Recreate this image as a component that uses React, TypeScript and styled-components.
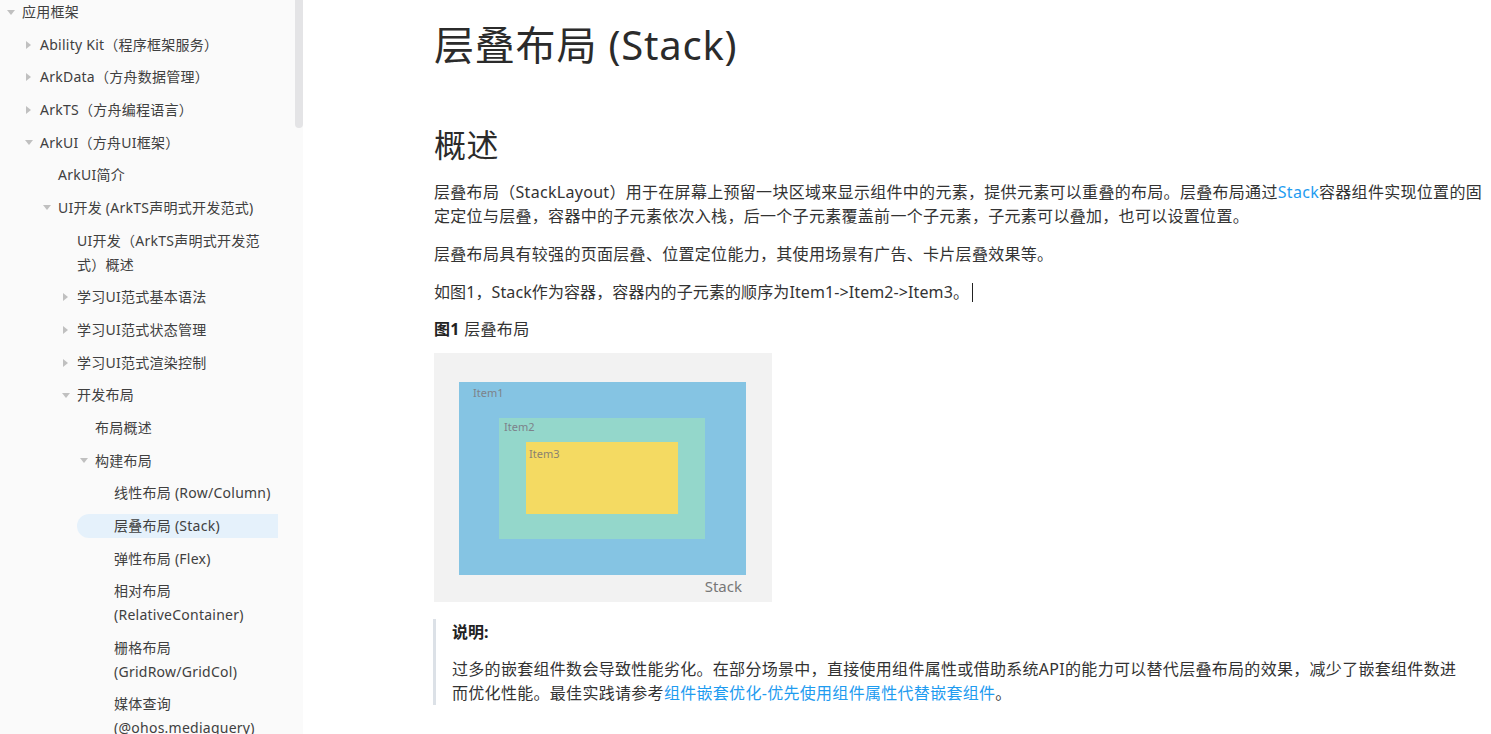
import React from "react";
import styled, { createGlobalStyle } from "styled-components";

const GlobalStyle = createGlobalStyle`
  html, body {
    margin: 0;
    padding: 0;
    background: #ffffff;
    overflow: hidden;
  }
  body {
    font-family: "Noto Sans", "Noto Sans CJK SC", sans-serif;
    color: #333333;
  }
`;

const Page = styled.div`
  display: flex;
  height: 734px;
  width: 1491px;
  overflow: hidden;
`;

const Sidebar = styled.aside`
  flex: none;
  width: 303px;
  height: 734px;
  background: #fafafa;
  display: flex;
  overflow: hidden;
`;

const Nav = styled.ul`
  list-style: none;
  margin: -4.33px 0 0 0;
  padding: 0;
  width: 295px;
  flex: none;
`;

const TEXT_X = [22, 40, 58, 77, 95, 114];

const Row = styled.li`
  padding: 4.33px 0;
`;

const Item = styled.div<{ $level: number; $active?: boolean }>`
  display: flex;
  align-items: flex-start;
  margin-left: ${(p) => TEXT_X[p.$level] - 37}px;
  margin-right: 17px;
  padding-left: 19px;
  border-radius: 12px 0 0 12px;
  background: ${(p) => (p.$active ? "#e5f1fb" : "transparent")};
`;

const CaretSlot = styled.span`
  flex: none;
  width: 18px;
  height: 24px;
  display: flex;
  align-items: center;
  padding-left: 4px;
  box-sizing: border-box;
`;

const Caret = styled.span<{ $open: boolean }>`
  width: 0;
  height: 0;
  ${(p) =>
    p.$open
      ? `border-left: 4px solid transparent;
         border-right: 4px solid transparent;
         border-top: 5px solid #c0c0c0;
         margin-left: -1px;`
      : `border-top: 4px solid transparent;
         border-bottom: 4px solid transparent;
         border-left: 5px solid #c0c0c0;`}
`;

const Label = styled.span`
  font-size: 14px;
  line-height: 24px;
  letter-spacing: 0.25px;
  color: #404040;
  white-space: nowrap;
`;

const ScrollTrack = styled.div`
  flex: none;
  width: 8px;
`;

const ScrollThumb = styled.div`
  width: 8px;
  height: 128px;
  background: #e4e4e6;
  border-radius: 0 0 4px 4px;
`;

const Main = styled.main`
  flex: 1;
  padding: 17px 0 0 131px;
  overflow: hidden;
`;

const Title = styled.h1`
  margin: 0;
  font-size: 40px;
  line-height: 56px;
  font-weight: 400;
  letter-spacing: 0.8px;
  color: #2b2b2b;
  white-space: nowrap;
`;

const SectionTitle = styled.h2`
  margin: 50px 0 0 0;
  font-size: 32px;
  line-height: 44px;
  font-weight: 400;
  letter-spacing: 0.4px;
  color: #2b2b2b;
`;

const Para = styled.p<{ $gap?: number; $spacing?: number }>`
  margin: ${(p) => p.$gap ?? 14}px 0 0 0;
  font-size: 16px;
  line-height: 24px;
  letter-spacing: ${(p) => p.$spacing ?? 0.3}px;
  color: #333333;
  white-space: nowrap;
`;

const Link = styled.a`
  color: #1f9cf0;
  text-decoration: none;
`;

const Cursor = styled.span`
  display: inline-block;
  width: 1px;
  height: 19px;
  background: #222;
  margin-left: 3px;
  vertical-align: -4px;
`;

const Caption = styled.p`
  margin: 13px 0 0 0;
  font-size: 16px;
  line-height: 24px;
  letter-spacing: 0.3px;
  color: #333333;
`;

const Strong = styled.strong`
  font-weight: 700;
  color: #222;
`;

const Figure = styled.div`
  margin-top: 12px;
  width: 338px;
  height: 249px;
  background: #f2f2f2;
`;

const Note = styled.div`
  margin: 17px 0 0 -1px;
  border-left: 3px solid #dce1e7;
  padding: 1px 0 0 16px;
  height: 85px;
`;

const NoteTitle = styled.div`
  font-size: 16px;
  line-height: 24px;
  font-weight: 700;
  color: #222;
`;

const NoteText = styled.p`
  margin: 13px 0 0 0;
  font-size: 16px;
  line-height: 24px;
  letter-spacing: 0.3px;
  color: #333333;
  white-space: nowrap;
`;

type NavEntry = {
  level: number;
  lines: string[];
  caret?: "open" | "closed";
  active?: boolean;
};

const NAV: NavEntry[] = [
  { level: 0, lines: ["应用框架"], caret: "open" },
  { level: 1, lines: ["Ability Kit（程序框架服务）"], caret: "closed" },
  { level: 1, lines: ["ArkData（方舟数据管理）"], caret: "closed" },
  { level: 1, lines: ["ArkTS（方舟编程语言）"], caret: "closed" },
  { level: 1, lines: ["ArkUI（方舟UI框架）"], caret: "open" },
  { level: 2, lines: ["ArkUI简介"] },
  { level: 2, lines: ["UI开发 (ArkTS声明式开发范式)"], caret: "open" },
  { level: 3, lines: ["UI开发（ArkTS声明式开发范", "式）概述"] },
  { level: 3, lines: ["学习UI范式基本语法"], caret: "closed" },
  { level: 3, lines: ["学习UI范式状态管理"], caret: "closed" },
  { level: 3, lines: ["学习UI范式渲染控制"], caret: "closed" },
  { level: 3, lines: ["开发布局"], caret: "open" },
  { level: 4, lines: ["布局概述"] },
  { level: 4, lines: ["构建布局"], caret: "open" },
  { level: 5, lines: ["线性布局 (Row/Column)"] },
  { level: 5, lines: ["层叠布局 (Stack)"], active: true },
  { level: 5, lines: ["弹性布局 (Flex)"] },
  { level: 5, lines: ["相对布局", "(RelativeContainer)"] },
  { level: 5, lines: ["栅格布局", "(GridRow/GridCol)"] },
  { level: 5, lines: ["媒体查询", "(@ohos.mediaquery)"] },
];

function StackDiagram() {
  return (
    <svg width="338" height="249" viewBox="0 0 338 249">
      <rect x="25" y="29" width="287" height="193" fill="#85c4e3" />
      <rect x="65" y="65" width="206" height="121" fill="#94d7cb" />
      <rect x="92" y="89" width="152" height="72" fill="#f4da62" />
      <text x="39" y="44" fontSize="11" fill="#7d828a" fontFamily="Noto Sans, sans-serif">
        Item1
      </text>
      <text x="70" y="78" fontSize="11" fill="#7d828a" fontFamily="Noto Sans, sans-serif">
        Item2
      </text>
      <text x="95" y="105" fontSize="11" fill="#8a8270" fontFamily="Noto Sans, sans-serif">
        Item3
      </text>
      <text x="308" y="239" fontSize="15" fill="#777777" textAnchor="end" fontFamily="Noto Sans, sans-serif">
        Stack
      </text>
    </svg>
  );
}

export default function App() {
  return (
    <>
      <GlobalStyle />
      <Page>
        <Sidebar>
          <Nav>
            {NAV.map((e, i) => (
              <Row key={i}>
                <Item $level={e.level} $active={e.active}>
                  <CaretSlot>{e.caret && <Caret $open={e.caret === "open"} />}</CaretSlot>
                  <Label>
                    {e.lines.map((l, j) => (
                      <React.Fragment key={j}>
                        {j > 0 && <br />}
                        {l}
                      </React.Fragment>
                    ))}
                  </Label>
                </Item>
              </Row>
            ))}
          </Nav>
          <ScrollTrack>
            <ScrollThumb />
          </ScrollTrack>
        </Sidebar>
        <Main>
          <Title>层叠布局 (Stack)</Title>
          <SectionTitle>概述</SectionTitle>
          <Para $gap={13}>
            层叠布局（StackLayout）用于在屏幕上预留一块区域来显示组件中的元素，提供元素可以重叠的布局。层叠布局通过
            <Link href="#">Stack</Link>容器组件实现位置的固
            <br />
            定定位与层叠，容器中的子元素依次入栈，后一个子元素覆盖前一个子元素，子元素可以叠加，也可以设置位置。
          </Para>
          <Para>层叠布局具有较强的页面层叠、位置定位能力，其使用场景有广告、卡片层叠效果等。</Para>
          <Para $spacing={0.1}>
            如图1，Stack作为容器，容器内的子元素的顺序为Item1-&gt;Item2-&gt;Item3。
            <Cursor />
          </Para>
          <Caption>
            <Strong>图1</Strong> 层叠布局
          </Caption>
          <Figure>
            <StackDiagram />
          </Figure>
          <Note>
            <NoteTitle>说明:</NoteTitle>
            <NoteText>
              过多的嵌套组件数会导致性能劣化。在部分场景中，直接使用组件属性或借助系统API的能力可以替代层叠布局的效果，减少了嵌套组件数进
              <br />
              而优化性能。最佳实践请参考<Link href="#">组件嵌套优化-优先使用组件属性代替嵌套组件</Link>。
            </NoteText>
          </Note>
        </Main>
      </Page>
    </>
  );
}
